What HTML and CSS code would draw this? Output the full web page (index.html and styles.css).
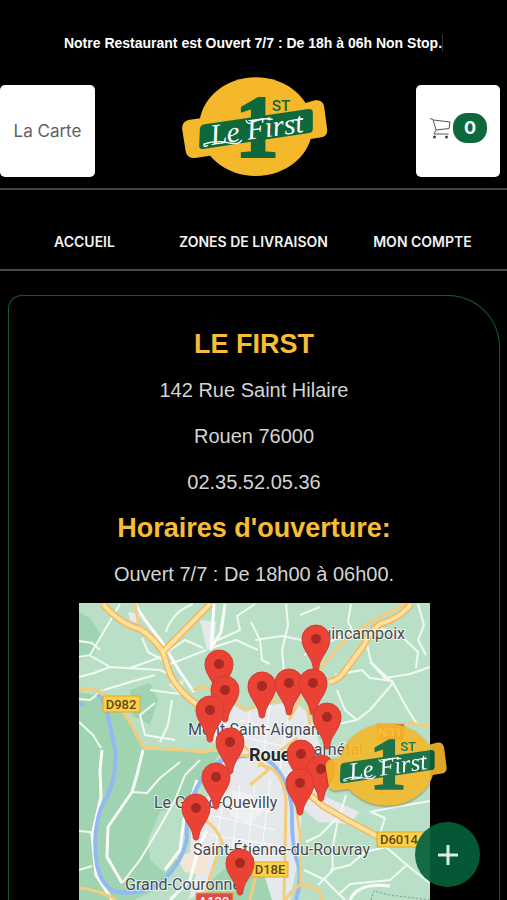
FILE: index.html
```html
<!DOCTYPE html>
<html lang="fr">
<head>
<meta charset="utf-8">
<meta name="viewport" content="width=device-width, initial-scale=1">
<title>Le First</title>
<link rel="stylesheet" href="styles.css">
</head>
<body>
<svg class="defs" aria-hidden="true">
  <defs>
    <symbol id="logo" viewBox="30 18 446 306">
      <ellipse cx="257" cy="170" rx="170" ry="148" fill="#f5b82a"/>
      <path d="M54 150 L406 99 L434 91 Q458 87 462 110 L471 178 Q473 198 454 202 L100 260 L74 264 Q52 265 47 246 L36 178 Q34 156 54 150Z" fill="#f5b82a"/>
      <text class="logo-one" x="260" y="259">1</text>
      <path d="M103 163 L415 117 Q427 116 428 127 V177 Q428 187 418 189 L99 237 Q87 238 87 227 L89 178 Q90 165 103 163Z" fill="#0d693c"/>
      <text class="logo-st" x="305" y="122">ST</text>
      <text class="logo-name" x="260" y="206" transform="rotate(-8 257 180)">Le First</text>
      <path d="M112 227 Q98 232 102 222 Q138 210 172 218 T214 211" fill="none" stroke="#fff" stroke-width="4" stroke-linecap="round"/>
      <path d="M228 152 Q234 166 250 156 Q275 142 306 148 M362 152 L396 146" fill="none" stroke="#fff" stroke-width="4" stroke-linecap="round"/>
    </symbol>
    <symbol id="pin" viewBox="-16 -16 32 50">
      <path d="M0 32 C-3 32 -3 29 -3 27 C-5 17 -14 11 -14 0 A14 14 0 0 1 14 0 C14 11 5 17 3 27 C3 29 3 32 0 32Z" fill="#ea4335" stroke="#d03c31"/>
      <circle r="5" fill="#a52a22"/>
    </symbol>
  </defs>
</svg>

<p class="notice"><span>Notre Restaurant est Ouvert 7/7 : De 18h à 06h Non Stop.</span></p>

<header class="header">
  <button class="tile tile-menu" type="button">La Carte</button>
  <a class="brand" href="#" aria-label="Le First"><svg class="brand-logo" aria-hidden="true"><use href="#logo"/></svg></a>
  <button class="tile tile-cart" type="button" aria-label="Panier">
    <svg class="cart-icon" viewBox="0 0 22 22" aria-hidden="true">
      <path d="M1 1.500 L4 2.500 L7 13 L20 11.500 L21 5 L4.500 3 M7 13 L5 17 H19.500" fill="none" stroke="#555" stroke-linejoin="round"/>
      <circle cx="5.500" cy="20" r="1.500" fill="#444"/><circle cx="17.500" cy="20" r="1.500" fill="#444"/>
    </svg>
    <span class="count">0</span>
  </button>
</header>

<nav class="nav">
  <a href="#">ACCUEIL</a>
  <a href="#">ZONES DE LIVRAISON</a>
  <a href="#">MON COMPTE</a>
</nav>

<main class="card">
  <h1>LE FIRST</h1>
  <p>142 Rue Saint Hilaire</p>
  <p>Rouen 76000</p>
  <p>02.35.52.05.36</p>
  <h2>Horaires d'ouverture:</h2>
  <p>Ouvert 7/7 : De 18h00 à 06h00.</p>
  <svg class="map" viewBox="79 603 351 297" role="img" aria-label="Zones de livraison">
    <rect x="79" y="603" width="351" height="297" fill="#b9e0c7"/>
    <!-- forests -->
    <g fill="#a0d4b0">
      <path d="M79 692 L100 696 L125 714 L143 750 L220 752 L200 785 L187 820 L184 845 L165 885 L135 900 H79Z"/>
      <path d="M79 612 L90 618 L101 635 L94 655 L79 660Z"/>
      <path d="M130 690 L150 683 L158 700 L150 725 L133 716Z"/>
      <path d="M205 885 L230 865 L260 870 L280 900 H210Z"/>
    </g>
    <path d="M160 812 L182 800 L187 820 L184 848 L165 873 L150 860 L148 840Z" fill="#b9e0c7"/>
    <!-- built-up areas -->
    <g fill="#e6e9eb">
      <path d="M225 700 L245 712 L262 706 L295 702 L310 715 L320 745 L330 765 L322 795 L359 812 L350 824 L318 822 L302 808 L300 850 L290 900 H272 L262 868 L236 850 L222 842 L205 890 L188 900 L196 875 L190 850 L192 820 L215 785 L224 755 L210 738Z"/>
      <path d="M200 620 L216 622 L214 648 L207 650Z M128 612 L140 614 L138 624 L130 620Z M168 684 L184 680 L180 695Z"/>
    </g>
    <path d="M176 858 L196 850 L210 860 L205 875 L185 872Z" fill="#f4e6d4"/>
    <path d="M232 790 L252 795 L262 812 L250 825 L230 815Z" fill="#eef0f2"/>
    <!-- minor roads -->
    <g fill="none" stroke="#f1faf2" stroke-width="2" stroke-linejoin="round">
      <path d="M120 604 L106 628 L90 655 L79 657 M89 655 L98 660 L110 667 L160 670 L174 676 M110 667 L94 673 L79 677 M130 668 L158 658 L185 640 L203 648"/>
      <path d="M193 604 Q172 612 166 632 M142 638 L148 652 L170 664 L186 658 L206 650 M255 604 L237 616 L240 630 L218 640 M211 648 L236 640 L258 650 M79 641 L92 643 L100 650"/>
      <path d="M286 604 L288 625 L282 650 L284 672 M304 655 L322 645 L350 632 M255 640 L282 636 L302 640 M251 622 L260 640 L262 660 L270 664 M300 615 L320 607 M351 604 L348 622 L355 635 M366 640 L371 662 L393 683 L370 710 L357 720 L338 724 M370 662 L385 678 L410 674 L430 667 M393 683 L408 710 L417 724 M376 627 L400 635 L418 652 L416 668 M418 604 L424 625 L418 640 L426 655 M335 675 L362 670 L370 678 L393 681 M337 690 L345 710 L357 720"/>
      <path d="M172 700 L168 725 L160 742 M150 690 L180 694 M155 703 L140 715 L145 735 L175 740 M104 690 L130 682 L155 675 M103 690 L90 700 L79 699 M79 722 L93 735 L101 748"/>
      <path d="M132 792 L147 793 L160 778 L180 762 M200 760 L185 775 L175 800 L158 830 L140 860 L122 883 M79 831 L90 832 L95 838 M79 870 L92 866"/>
      <path d="M346 795 L340 815 L320 835 L306 842 M338 820 L332 850 L333 870 L318 885 M371 812 L385 818 L378 840 L386 847 L408 866 L430 883 M408 864 L390 880 L350 884 L338 895 M386 847 L365 852 L350 865 L330 870 M370 812 L390 808 L430 801 M304 870 L325 880 L345 900"/>
    </g>
    <g fill="none" stroke="#fbfdfb" stroke-width="3" stroke-linejoin="round">
      <path d="M135 604 L145 620 L164 645 L180 672 L194 692 M214 604 L211 650 M225 604 L221 632 L213 645"/>
      <path d="M102 750 L100 770 L101 797 L92 835 L96 875 L112 900 M143 750 L137 775 L132 792 L108 827 L107 857 L122 883"/>
      <path d="M197 780 L184 820 L180 850 L165 870 M207 830 L198 850 L190 880 L170 900 M350 900 Q358 882 390 886"/>
    </g>
    <g fill="none" stroke="#f8fafb" stroke-width="1">
      <path d="M215 800 L270 812 M210 815 L275 830 M210 835 L275 845 M225 790 L215 850 M240 785 L232 850 M255 785 L248 848 M270 780 L262 850 M240 720 L290 735 M235 735 L300 750 M250 712 L242 760 M270 705 L262 765 M290 705 L280 770"/>
    </g>
    <!-- the Seine -->
    <path d="M79 704 L84 705 M98 694 Q107 705 110 725 L115 750 Q118 782 101 808 Q92 835 97 865 Q102 889 118 892 Q142 896 163 881 Q183 861 187 838 Q185 807 200 782 Q212 760 232 758 Q266 750 279 772 Q293 791 292 820 Q292 849 299 867 Q301 884 296 900" fill="none" stroke="#92b9f1" stroke-width="4"/>
    <!-- main roads -->
    <g fill="none" stroke="#f5cb7c" stroke-width="3" stroke-linejoin="round">
      <path d="M79 689 Q97 688 108 696 Q121 706 131 724 L143 747 L205 752 L228 744 M135 604 L139 627 M193 690 L199 687 L214 689 L235 700 Q245 716 258 704 L282 699 L310 680 L347 638 L374 620 L405 604 M289 720 L300 700 L312 684 M307 705 L310 725 M205 820 Q218 829 222 842 Q212 868 206 891 M79 888 Q100 890 116 900 M256 875 L250 900 M232 754 L244 746 L268 770 L250 785"/>
      <path d="M258 765 Q282 765 286 800 L284 900 M294 790 L300 835 L301 885 Q320 885 322 900 M300 885 Q290 891 286 900 M240 755 L270 758 L298 738 M407 723 L430 726"/>
    </g>
    <g fill="none" stroke="#f0b958" stroke-width="7" stroke-linejoin="round">
      <path d="M103 604 Q120 624 140 629 Q154 638 163 652 L170 674 Q179 693 202 708 M163 652 L210 604 M411 604 Q402 616 386 622 Q374 624 364 645 L347 668 Q340 680 329 682 M304 790 L323 806 L347 820 L390 843"/>
    </g>
    <g fill="none" stroke="#ffe0a0" stroke-width="4" stroke-linejoin="round">
      <path d="M103 604 Q120 624 140 629 Q154 638 163 652 L170 674 Q179 693 202 708 M163 652 L210 604 M411 604 Q402 616 386 622 Q374 624 364 645 L347 668 Q340 680 329 682 M304 790 L323 806 L347 820 L390 843"/>
    </g>
    <path d="M371 900 L374 891 L390 895 L430 900" fill="none" stroke="#7b9b88" stroke-dasharray="2 2"/>
    <!-- road numbers -->
    <g stroke="#e0a92c">
      <rect x="103" y="696" width="37" height="16" fill="#fcd04b"/>
      <rect x="377" y="832" width="46" height="15" fill="#fcd04b"/>
      <rect x="252" y="862" width="36" height="15" fill="#fcd04b"/>
      <rect x="196" y="893" width="37" height="16" fill="#e5484d"/>
      <rect x="377" y="724" width="27" height="16" fill="#e5574b"/>
    </g>
    <g class="road-label">
      <text x="121" y="709">D982</text>
      <text x="399" y="844">D6014</text>
      <text x="270" y="874">D18E</text>
      <text class="on-red" x="214" y="906">A139</text>
      <text class="on-red" x="390" y="737">N31</text>
    </g>
    <!-- towns -->
    <g class="town">
      <text x="405" y="639" text-anchor="end">Quincampoix</text>
      <text x="188" y="735">Mont-Saint-Aignan</text>
      <text class="city" x="249" y="761">Rouen</text>
      <text x="363" y="755" text-anchor="end">Darnétal</text>
      <text x="154" y="808">Le Grand-Quevilly</text>
      <text x="193" y="855">Saint-Étienne-du-Rouvray</text>
      <text x="125" y="890">Grand-Couronne</text>
    </g>
    <!-- delivery points -->
    <g>
      <use href="#pin" x="203" y="648" width="32" height="50"/>
      <use href="#pin" x="300" y="623" width="32" height="50"/>
      <use href="#pin" x="246" y="670" width="32" height="50"/>
      <use href="#pin" x="273" y="667" width="32" height="50"/>
      <use href="#pin" x="297" y="667" width="32" height="50"/>
      <use href="#pin" x="209" y="674" width="32" height="50"/>
      <use href="#pin" x="194" y="694" width="32" height="50"/>
      <use href="#pin" x="311" y="701" width="32" height="50"/>
      <use href="#pin" x="214" y="726" width="32" height="50"/>
      <use href="#pin" x="285" y="738" width="32" height="50"/>
      <use href="#pin" x="305" y="753" width="32" height="50"/>
      <use href="#pin" x="200" y="761" width="32" height="50"/>
      <use href="#pin" x="284" y="767" width="32" height="50"/>
      <use href="#pin" x="180" y="792" width="32" height="50"/>
      <use href="#pin" x="224" y="847" width="32" height="50"/>
    </g>
  </svg>
</main>

<svg class="floating-logo" aria-hidden="true"><use href="#logo"/></svg>
<button class="fab" type="button" aria-label="Plus">
  <svg viewBox="0 0 20 20" aria-hidden="true"><path d="M10 0 V20 M0 10 H20" stroke="#dfe8e3" stroke-width="3"/></svg>
</button>
</body>
</html>
```
FILE: styles.css
```css
* {
  box-sizing: border-box;
}

body {
  margin: 0;
  background: #000;
  color: #fff;
  font-family: "Liberation Sans", Arial, sans-serif;
}

h1, h2, p {
  margin: 0;
}

button {
  border: 0;
  padding: 0;
  font: inherit;
  cursor: pointer;
}

.defs {
  position: absolute;
  width: 0;
  height: 0;
}

.notice {
  padding: 34px 0 24px;
  font-size: 14px;
  font-weight: 700;
  line-height: 18px;
  text-align: center;
}

.notice span {
  display: inline-block;
  border-right: 1px solid #333;
}

.header {
  display: grid;
  grid-template-columns: 1fr auto 1fr;
  align-items: center;
  padding: 0 7px 10px 0;
  border-bottom: 2px solid #444;
}

.tile {
  display: flex;
  align-items: center;
  justify-content: center;
  height: 92px;
  margin-top: 8px;
  border-radius: 5px;
  background: #fff;
}

.tile-menu {
  justify-self: start;
  width: 95px;
  color: #606060;
  font-family: Inter, sans-serif;
  font-size: 17px;
}

.tile-cart {
  justify-self: end;
  width: 84px;
  gap: 2px;
  padding-bottom: 6px;
}

.brand {
  display: block;
  margin-left: 9px;
}

.brand-logo {
  display: block;
  width: 149px;
  height: 102px;
}

.logo-one {
  fill: #0d693c;
  stroke: #0d693c;
  stroke-width: 6px;
  font: 700 266px "Liberation Serif", serif;
  text-anchor: middle;
}

.logo-st {
  fill: #0d693c;
  font: 500 46px Roboto, sans-serif;
}

.logo-name {
  fill: #fff;
  font: italic 400 88px "Liberation Serif", cursive;
  text-anchor: middle;
}

.cart-icon {
  width: 22px;
  height: 22px;
}

.count {
  width: 34px;
  border-radius: 14px;
  background: #0d693c;
  color: #fff;
  font-family: Inter, sans-serif;
  font-size: 18px;
  font-weight: 700;
  line-height: 30px;
  text-align: center;
}

.nav {
  display: grid;
  grid-template-columns: repeat(3, 1fr);
  padding: 42px 0 18px;
  border-bottom: 2px solid #4a4a4a;
}

.nav a {
  color: #f2f2f2;
  font-family: Inter, sans-serif;
  font-size: 14px;
  font-weight: 600;
  line-height: 19px;
  text-align: center;
  text-decoration: none;
}

.card {
  margin: 24px 7px 0 8px;
  padding-top: 25px;
  border: 1px solid #0f5a3e;
  border-bottom: 0;
  border-radius: 14px 52px 0 0;
  text-align: center;
}

.card h1,
.card h2 {
  color: #f8bd36;
  font-size: 27px;
  font-weight: 700;
  line-height: 46px;
}

.card p {
  color: #d4d4d4;
  font-size: 20px;
  line-height: 46px;
}

.map {
  display: block;
  width: 100%;
  max-width: 351px;
  margin: 6px auto 0;
}

.town {
  fill: #464a50;
  stroke: #ffffffb0;
  stroke-width: 2px;
  paint-order: stroke;
  font: 400 16px Roboto, sans-serif;
}

.town .city {
  fill: #26282c;
  font-size: 18px;
  font-weight: 700;
}

.road-label {
  fill: #5c4a18;
  font: 500 13px Roboto, sans-serif;
  text-anchor: middle;
}

.road-label .on-red {
  fill: #fff;
}

.floating-logo {
  position: fixed;
  right: 59px;
  bottom: 91px;
  width: 124px;
  height: 88px;
  opacity: 0.9;
  filter: drop-shadow(0 1px 1px #0006);
}

.fab {
  position: fixed;
  right: 27px;
  bottom: 13px;
  display: flex;
  align-items: center;
  justify-content: center;
  width: 65px;
  height: 65px;
  border-radius: 50%;
  background: #05603aeb;
}

.fab svg {
  width: 20px;
  height: 20px;
}
```
